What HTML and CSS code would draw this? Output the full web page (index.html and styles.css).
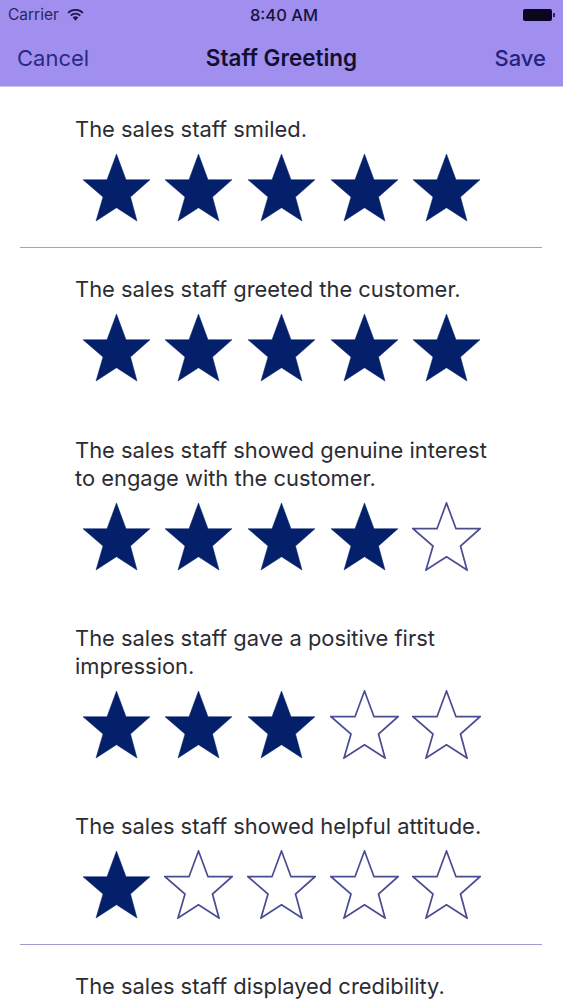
FILE: index.html
```html
<!DOCTYPE html>
<html lang="en">
<head>
    <meta charset="UTF-8">
    <meta name="viewport" content="width=device-width, initial-scale=1.0">
    <title>Staff Greeting</title>
    <link rel="stylesheet" href="styles.css">
</head>
<body>
    <svg class="defs" width="0" height="0">
        <symbol id="star" viewBox="-1 -1 69 69">
            <polygon points="33.5,0 43,25.7 67,25.7 47.5,43 54,67 33.5,53.7 13,67 20,43 0,25.7 24,25.7"/>
        </symbol>
    </svg>

    <header class="bar">
        <div class="status">
            <div class="status_left">
                <span>Carrier</span>
                <svg class="wifi" viewBox="0 0 17 12" width="17" height="12">
                    <path class="wifi_arc" d="M1 3.8A10.8 10.8 0 0 1 16 3.8"/>
                    <path class="wifi_arc" d="M3.7 6.6A7 7 0 0 1 13.3 6.6"/>
                    <path d="M8.5 11.8 5.6 8.6a4.2 4.2 0 0 1 5.8 0Z"/>
                </svg>
            </div>
            <span class="time">8:40 AM</span>
            <div class="battery"></div>
        </div>
        <nav class="nav">
            <span class="nav_link">Cancel</span>
            <span class="nav_title">Staff Greeting</span>
            <span class="nav_link nav_save">Save</span>
        </nav>
    </header>

    <main class="list">
        <section class="item item_line">
            <p>The sales staff smiled.</p>
            <div class="stars">
                <svg class="star on"><use href="#star"/></svg>
                <svg class="star on"><use href="#star"/></svg>
                <svg class="star on"><use href="#star"/></svg>
                <svg class="star on"><use href="#star"/></svg>
                <svg class="star on"><use href="#star"/></svg>
            </div>
        </section>
        <section class="item">
            <p>The sales staff greeted the customer.</p>
            <div class="stars">
                <svg class="star on"><use href="#star"/></svg>
                <svg class="star on"><use href="#star"/></svg>
                <svg class="star on"><use href="#star"/></svg>
                <svg class="star on"><use href="#star"/></svg>
                <svg class="star on"><use href="#star"/></svg>
            </div>
        </section>
        <section class="item item_two">
            <p>The sales staff showed genuine interest<br>to engage with the customer.</p>
            <div class="stars">
                <svg class="star on"><use href="#star"/></svg>
                <svg class="star on"><use href="#star"/></svg>
                <svg class="star on"><use href="#star"/></svg>
                <svg class="star on"><use href="#star"/></svg>
                <svg class="star"><use href="#star"/></svg>
            </div>
        </section>
        <section class="item item_two">
            <p>The sales staff gave a positive first<br>impression.</p>
            <div class="stars">
                <svg class="star on"><use href="#star"/></svg>
                <svg class="star on"><use href="#star"/></svg>
                <svg class="star on"><use href="#star"/></svg>
                <svg class="star"><use href="#star"/></svg>
                <svg class="star"><use href="#star"/></svg>
            </div>
        </section>
        <section class="item item_line item_line-blue">
            <p>The sales staff showed helpful attitude.</p>
            <div class="stars">
                <svg class="star on"><use href="#star"/></svg>
                <svg class="star"><use href="#star"/></svg>
                <svg class="star"><use href="#star"/></svg>
                <svg class="star"><use href="#star"/></svg>
                <svg class="star"><use href="#star"/></svg>
            </div>
        </section>
        <section class="item item_last">
            <p>The sales staff displayed credibility.</p>
        </section>
    </main>
</body>
</html>
```

FILE: styles.css
```css
html, body {
    margin: 0;
    padding: 0;
    height: 1000px;
    overflow: hidden;
    background-color: #ffffff;
    font-family: Inter, "Liberation Sans", sans-serif;
}

.defs {
    position: absolute;
}

.bar {
    height: 86px;
    background-color: #a08fef;
    border-bottom: 1px solid #c9c3ee;
}

.status {
    height: 29px;
    padding: 0 8px 0 8px;
    display: grid;
    grid-template-columns: 1fr auto 1fr;
    align-items: center;
    font-size: 15.5px;
    color: #2a2560;
}

.status_left {
    display: flex;
    align-items: center;
    gap: 8px;
}

.wifi {
    fill: #1f1a52;
}

.wifi_arc {
    fill: none;
    stroke: #1f1a52;
    stroke-width: 1.8;
}

.time {
    margin-left: 5px;
    color: #15123a;
    font-size: 16.5px;
    font-weight: 500;
}

.battery {
    justify-self: end;
    position: relative;
    width: 29px;
    height: 12px;
    margin-right: 3px;
    background-color: #0b0620;
    border-radius: 2px;
}

.battery::after {
    content: "";
    position: absolute;
    top: 4px;
    right: -3px;
    width: 2px;
    height: 4px;
    background-color: #2a2560;
}

.nav {
    height: 57px;
    padding: 0 17px;
    display: grid;
    grid-template-columns: 1fr auto 1fr;
    align-items: center;
    font-size: 22px;
}

.nav_link {
    color: #2a2a85;
}

.nav_save {
    justify-self: end;
    color: #23237c;
    font-weight: 500;
}

.nav_title {
    color: #12102e;
    font-size: 22.5px;
    font-weight: 600;
}

.list {
    padding: 28px 21px 0 20px;
}

.item {
    padding-bottom: 27px;
    margin-bottom: 27px;
}

.item_two {
    padding-bottom: 26px;
}

.item_line {
    border-bottom: 1px solid #a5a5ab;
    padding-bottom: 25px;
    margin-bottom: 27px;
}

.item_line-blue {
    border-bottom-color: #9a9bc8;
}

.item_last {
    padding-bottom: 0;
    margin-bottom: 0;
}

.item p {
    margin: 0;
    padding-left: 55px;
    font-size: 21.9px;
    line-height: 28px;
    color: #2c2c32;
}

.stars {
    margin-top: 10px;
    padding-left: 61.5px;
    display: flex;
    gap: 13.7px;
}

.star {
    width: 69px;
    height: 69px;
    fill: #ffffff;
    stroke: #4a4c92;
    stroke-width: 1.7;
}

.star.on {
    fill: #04206a;
    stroke: #04206a;
    stroke-width: 0.5;
}
```
